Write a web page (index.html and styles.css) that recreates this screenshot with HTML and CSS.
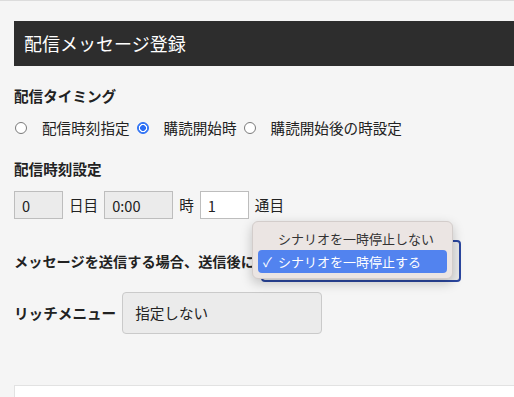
FILE: index.html
```html
<!DOCTYPE html>
<html lang="ja">
<head>
    <meta charset="UTF-8">
    <meta name="viewport" content="width=device-width, initial-scale=1.0">
    <title>配信メッセージ登録</title>
    <link rel="stylesheet" href="styles.css">
</head>
<body>
    <main class="page">
        <h1 class="title">配信メッセージ登録</h1>

        <section class="field">
            <h2 class="field-label">配信タイミング</h2>
            <div class="radios">
                <label class="radio"><input type="radio" name="timing"><span>配信時刻指定</span></label>
                <label class="radio"><input type="radio" name="timing" checked><span>購読開始時</span></label>
                <label class="radio"><input type="radio" name="timing"><span>購読開始後の時設定</span></label>
            </div>
        </section>

        <section class="field">
            <h2 class="field-label gap-top">配信時刻設定</h2>
            <div class="time-row">
                <input class="box short" type="text" value="0" disabled>
                <span>日目</span>
                <input class="box mid" type="text" value="0:00" disabled>
                <span>時</span>
                <input class="box short" type="text" value="1">
                <span>通目</span>
            </div>
        </section>

        <div class="inline-row pause-row">
            <span class="inline-label">メッセージを送信する場合、送信後に</span>
            <div class="select-wrap">
                <div class="select focused"></div>
                <ul class="popup">
                    <li class="option">シナリオを一時停止しない</li>
                    <li class="option selected"><span class="check">✓</span>シナリオを一時停止する</li>
                </ul>
            </div>
        </div>

        <div class="inline-row menu-row">
            <span class="inline-label">リッチメニュー</span>
            <div class="select">指定しない</div>
        </div>

        <div class="panel"></div>
    </main>
</body>
</html>
```

FILE: styles.css
```css
body {
    margin: 0;
    background-color: #f5f5f5;
    border-top: 1px solid #dcdcdc;
    color: #222;
    font-family: 'Noto Sans CJK JP', 'Noto Sans', sans-serif;
    font-size: 14.6px;
    line-height: 20px;
    overflow: hidden;
    height: 396px;
}

.page {
    padding-left: 14px;
}

.title {
    margin: 20px 0 0;
    height: 45px;
    padding-left: 10px;
    background-color: #2d2d2d;
    color: #fff;
    font-size: 18px;
    font-weight: normal;
    line-height: 45px;
}

.field-label {
    margin: 20px 0 0;
    font-size: 14.6px;
    font-weight: bold;
    line-height: 20px;
}

.field-label.gap-top {
    margin-top: 21px;
}

.radios {
    display: flex;
    align-items: center;
    margin-top: 12px;
    height: 20px;
}

.radio {
    display: flex;
    align-items: center;
    margin-right: 7px;
}

.radio input {
    appearance: none;
    -webkit-appearance: none;
    box-sizing: border-box;
    width: 12px;
    height: 12px;
    margin: 0 15px 0 0;
    border: 1px solid #7a7a7a;
    border-radius: 50%;
    background: #fff;
}

.radio:first-child input {
    margin-left: 1px;
}

.radio input:checked {
    border: 1px solid #2a6df4;
    background: radial-gradient(circle, #2a6df4 0 2.6px, #fff 3.2px 3.8px, #3b7ef6 4.4px);
}

.time-row {
    display: flex;
    align-items: center;
    gap: 6px;
    margin-top: 12px;
}

.box {
    box-sizing: border-box;
    height: 28px;
    padding: 0 7px;
    border: 1px solid #bdbdbd;
    background: #fff;
    color: #222;
    font-family: inherit;
    font-size: 14.6px;
}

.box:disabled {
    background: #ebebeb;
    color: #222;
}

.box.short {
    width: 49px;
}

.box.mid {
    width: 69px;
}

.inline-row {
    display: flex;
    align-items: center;
    gap: 5px;
}

.inline-label {
    font-weight: bold;
    white-space: nowrap;
}

.pause-row {
    margin-top: 21px;
}

.pause-row .inline-label {
    width: 242px;
    font-size: 14.2px;
}

.menu-row {
    margin-top: 10px;
    gap: 6px;
}

.select {
    box-sizing: border-box;
    width: 200px;
    height: 42px;
    padding: 0 12px;
    border: 1px solid #cacaca;
    border-radius: 4px;
    background: #ebebeb;
    line-height: 40px;
}

.select-wrap {
    position: relative;
}

.select.focused {
    border: 2px solid #2b47a0;
}

.popup {
    position: absolute;
    left: -9px;
    top: -19px;
    box-sizing: border-box;
    width: 201px;
    margin: 0;
    padding: 5px;
    list-style: none;
    background: #ebe5e3;
    border: 1px solid #d3cdcb;
    border-radius: 6px;
    box-shadow: 0 4px 12px rgba(0, 0, 0, 0.22);
    font-size: 13px;
}

.option {
    position: relative;
    height: 23px;
    padding-left: 20px;
    border-radius: 4px;
    line-height: 23px;
    color: #333;
}

.option.selected {
    background: #5283ef;
    color: #fff;
}

.check {
    position: absolute;
    left: 5px;
    top: 0;
}

.panel {
    margin-top: 51px;
    height: 60px;
    background: #fff;
    border: 1px solid #e2e2e2;
    border-right: none;
}
```
